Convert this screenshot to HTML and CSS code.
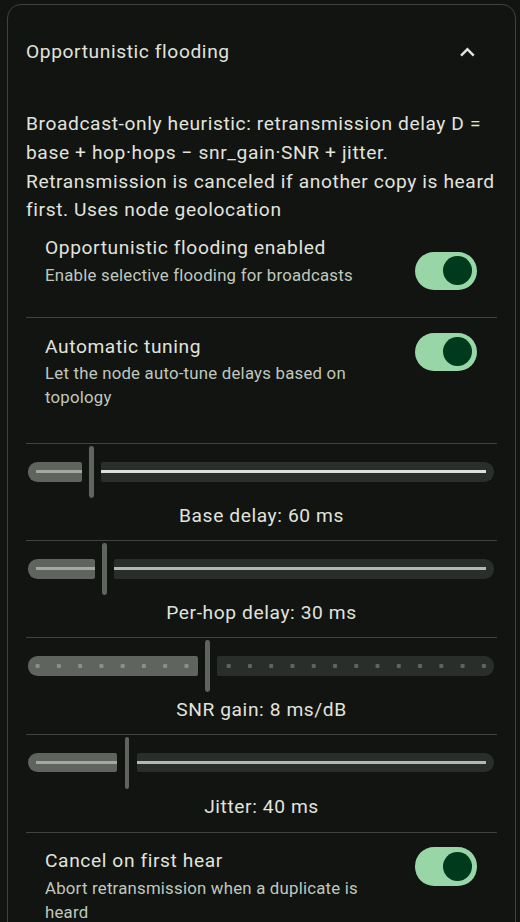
FILE: index.html
```html
<!DOCTYPE html>
<html lang="en">
<head>
    <meta charset="UTF-8">
    <meta name="viewport" content="width=device-width, initial-scale=1.0">
    <title>Opportunistic flooding</title>
    <link rel="stylesheet" href="styles.css">
</head>
<body>
    <div class="card">
        <div class="card-header">
            <span class="card-title">Opportunistic flooding</span>
            <svg class="chevron" viewBox="0 0 24 24"><path d="M12 8l-6 6 1.41 1.41L12 10.83l4.59 4.58L18 14z"/></svg>
        </div>

        <p class="desc">Broadcast-only heuristic: retransmission delay D = base + hop·hops − snr_gain·SNR + jitter. Retransmission is canceled if another copy is heard first. Uses node geolocation</p>

        <div class="setting setting-first">
            <div class="setting-text">
                <div class="setting-title">Opportunistic flooding enabled</div>
                <div class="setting-sub">Enable selective flooding for broadcasts</div>
            </div>
            <span class="switch"></span>
        </div>
        <div class="divider"></div>

        <div class="setting setting-last">
            <div class="setting-text">
                <div class="setting-title">Automatic tuning</div>
                <div class="setting-sub">Let the node auto-tune delays based on topology</div>
            </div>
            <span class="switch"></span>
        </div>
        <div class="divider"></div>

        <!-- sliders are disabled while automatic tuning is on -->
        <div class="slider-block">
            <div class="slider slider-dense">
                <div class="track-active" style="width: 53.6px"></div>
                <div class="thumb"></div>
                <div class="track-inactive"></div>
            </div>
            <div class="slider-label">Base delay: 60 ms</div>
        </div>
        <div class="divider"></div>

        <div class="slider-block">
            <div class="slider slider-fine">
                <div class="track-active" style="width: 67px"></div>
                <div class="thumb"></div>
                <div class="track-inactive"></div>
            </div>
            <div class="slider-label">Per-hop delay: 30 ms</div>
        </div>
        <div class="divider"></div>

        <div class="slider-block">
            <div class="slider slider-steps">
                <div class="track-active" style="width: 170.2px"></div>
                <div class="thumb"></div>
                <div class="track-inactive"></div>
            </div>
            <div class="slider-label">SNR gain: 8 ms/dB</div>
        </div>
        <div class="divider"></div>

        <div class="slider-block slider-block-last">
            <div class="slider slider-fine">
                <div class="track-active" style="width: 89.4px"></div>
                <div class="thumb"></div>
                <div class="track-inactive"></div>
            </div>
            <div class="slider-label">Jitter: 40 ms</div>
        </div>
        <div class="divider"></div>

        <div class="setting">
            <div class="setting-text">
                <div class="setting-title">Cancel on first hear</div>
                <div class="setting-sub">Abort retransmission when a duplicate is heard</div>
            </div>
            <span class="switch"></span>
        </div>
    </div>
</body>
</html>
```

FILE: styles.css
```css
body {
    margin: 0;
    background-color: #111411;
    font-family: Roboto, "Noto Sans", sans-serif;
    color: #e1e3dc;
}
.card {
    box-sizing: border-box;
    width: 509px;
    margin: 4px 0 0 7px;
    padding: 0 18px 40px 18px;
    border: 1px solid #3f443f;
    border-radius: 14px;
    background-color: #111411;
}
.card-header {
    display: flex;
    align-items: center;
    padding-top: 33px;
}
.card-title {
    flex: 1;
    font-size: 19.2px;
    line-height: 28.8px;
    letter-spacing: 0.6px;
}
.chevron {
    width: 28.8px;
    height: 28.8px;
    margin-right: 15.4px;
    fill: #e1e3dc;
}
.desc {
    margin: 43.2px 0 0 0;
    font-size: 19.2px;
    line-height: 28.8px;
    letter-spacing: 0.6px;
}
.setting {
    display: flex;
    align-items: flex-start;
    padding: 14px 20px 0 19px;
}
.setting-first {
    padding-top: 9.2px;
    padding-bottom: 26.6px;
}
.setting-first .switch {
    margin-top: 17.3px;
}
.setting-last {
    padding-top: 15px;
    padding-bottom: 33.5px;
}
.setting-text {
    flex: 1;
}
.setting-title {
    font-size: 19.2px;
    line-height: 28.8px;
    letter-spacing: 0.6px;
}
.setting-sub {
    font-size: 16.8px;
    line-height: 24px;
    letter-spacing: 0.22px;
    color: #c0c8bd;
    padding-right: 40px;
}
.switch {
    position: relative;
    flex: none;
    width: 62.4px;
    height: 38.4px;
    border-radius: 19.2px;
    background-color: #99d6a7;
}
.switch::after {
    content: "";
    position: absolute;
    top: 4.8px;
    right: 4.8px;
    width: 28.8px;
    height: 28.8px;
    border-radius: 50%;
    background-color: #003a1c;
}
.divider {
    height: 1px;
    background-color: #3e443e;
}
.slider-block {
    padding: 2px 0 9.5px 0;
}
.slider-block-last {
    padding-bottom: 11px;
}
.slider {
    display: flex;
    align-items: center;
    height: 52px;
    margin: 0 3px 0 2px;
}
.track-active,
.track-inactive {
    position: relative;
    height: 19.2px;
}
.track-active {
    flex: none;
    margin-right: 7.2px;
    border-radius: 9.6px 2px 2px 9.6px;
    background-color: #5f645e;
}
.track-inactive {
    flex: 1;
    margin-left: 7.2px;
    border-radius: 2px 9.6px 9.6px 2px;
    background-color: #2a2e2a;
}
.thumb {
    flex: none;
    width: 4.8px;
    height: 52px;
    border-radius: 2.4px;
    background-color: #5f645e;
}
.slider-dense .track-active::after,
.slider-dense .track-inactive::after,
.slider-fine .track-active::after,
.slider-fine .track-inactive::after {
    content: "";
    position: absolute;
    top: 8px;
    height: 3px;
}
.slider-dense .track-active::after,
.slider-fine .track-active::after {
    left: 8px;
    right: 0;
    background-color: #a3a8a1;
}
.slider-dense .track-inactive::after,
.slider-fine .track-inactive::after {
    left: 0;
    right: 8px;
}
.slider-dense .track-inactive::after {
    background-color: #dde0da;
}
.slider-fine .track-inactive::after {
    background-color: #b4b8b1;
}
.slider-steps .track-active {
    background: radial-gradient(circle, #8b908a 0 2px, transparent 2.5px) -1.04px 0 / 21.276px 100% repeat-x, #5f645e;
}
.slider-steps .track-inactive {
    background: radial-gradient(circle, #5f645e 0 2px, transparent 2.5px) 1.04px 0 / 21.276px 100% repeat-x, #2a2e2a;
}
.slider-label {
    margin-top: 3.7px;
    text-align: center;
    font-size: 19.2px;
    line-height: 28.8px;
    letter-spacing: 0.6px;
}
```
